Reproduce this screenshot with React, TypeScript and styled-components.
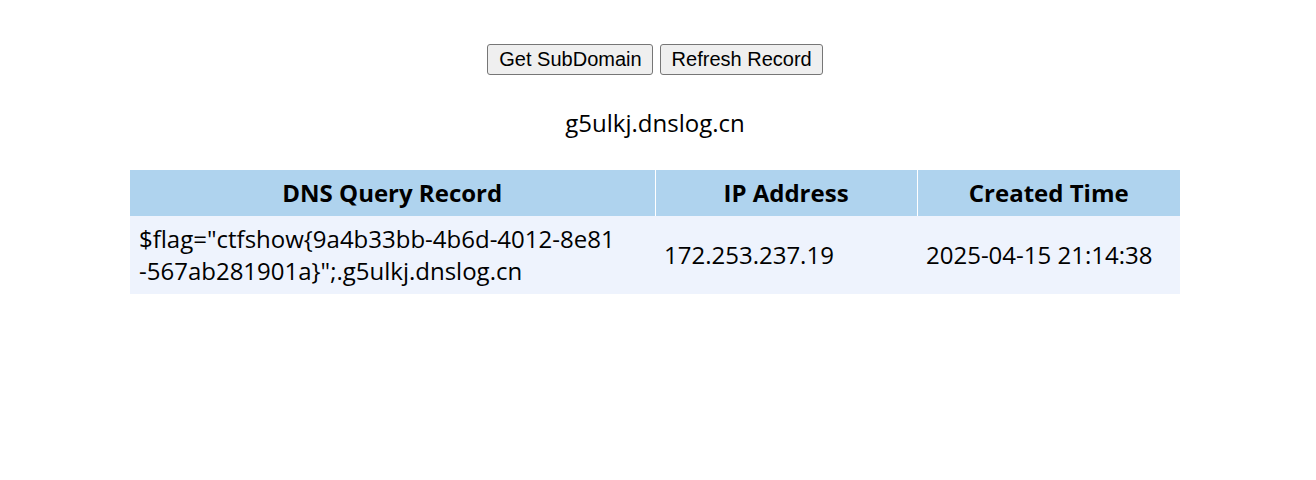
import React from 'react';
import styled, { createGlobalStyle } from 'styled-components';

interface DnsRecord {
  subdomain: string;
  ip: string;
  created: string;
}

const records: DnsRecord[] = [
  {
    subdomain: '$flag="ctfshow{9a4b33bb-4b6d-4012-8e81-567ab281901a}";.g5ulkj.dnslog.cn',
    ip: '172.253.237.19',
    created: '2025-04-15 21:14:38',
  },
];

const GlobalStyle = createGlobalStyle`
  html, body {
    margin: 0;
    padding: 0;
    background: #ffffff;
  }
  body {
    font-family: "Open Sans", "Noto Sans", sans-serif;
    color: #000;
  }
`;

const Page = styled.div`
  display: flex;
  flex-direction: column;
  align-items: center;
  padding: 44px 6px 0 0;
`;

const Toolbar = styled.div`
  display: flex;
  gap: 7px;
`;

const ActionButton = styled.button`
  font-family: "Liberation Sans", Arial, sans-serif;
  font-size: 20px;
  line-height: 23px;
  padding: 3px 10px 3px 11px;
  color: #000;
  background: #efefef;
  border: 1px solid #767676;
  border-radius: 3px;
  cursor: pointer;
`;

const Domain = styled.div`
  margin-top: 32px;
  font-size: 24px;
  line-height: 32px;
`;

const Table = styled.table`
  margin-top: 31px;
  width: 1050px;
  border-collapse: collapse;
  table-layout: fixed;
  font-size: 24px;
  line-height: 32px;
`;

const HeadCell = styled.th<{ $width: number }>`
  box-sizing: border-box;
  width: ${props => props.$width}px;
  background: #afd3ee;
  border-left: 1px solid #ffffff;
  padding: 7px 10px;
  font-weight: 700;
  text-align: center;

  &:first-child {
    border-left: none;
  }
`;

const Cell = styled.td<{ $wrap?: boolean }>`
  background: #eef3fd;
  padding: 7px ${props => (props.$wrap ? '38px' : '10px')} 7px 9px;
  text-align: left;
  word-break: ${props => (props.$wrap ? 'break-all' : 'normal')};
`;

const App: React.FC = () => {
  return (
    <>
      <GlobalStyle />
      <Page>
        <Toolbar>
          <ActionButton>Get SubDomain</ActionButton>
          <ActionButton>Refresh Record</ActionButton>
        </Toolbar>
        <Domain>g5ulkj.dnslog.cn</Domain>
        <Table>
          <thead>
            <tr>
              <HeadCell $width={525}>DNS Query Record</HeadCell>
              <HeadCell $width={262}>IP Address</HeadCell>
              <HeadCell $width={263}>Created Time</HeadCell>
            </tr>
          </thead>
          <tbody>
            {records.map(record => (
              <tr key={record.subdomain}>
                <Cell $wrap>{record.subdomain}</Cell>
                <Cell>{record.ip}</Cell>
                <Cell>{record.created}</Cell>
              </tr>
            ))}
          </tbody>
        </Table>
      </Page>
    </>
  );
};

export default App;
